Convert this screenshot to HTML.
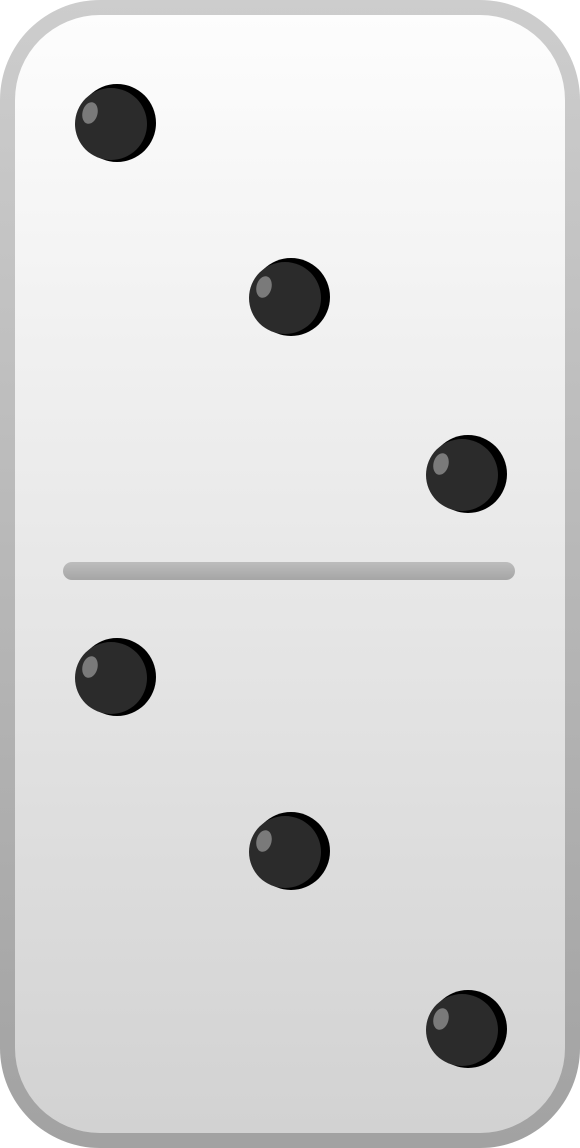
<!DOCTYPE html>
<html><head><style>
html,body{margin:0;padding:0;background:#fff;}
</style></head><body>
<svg width="580" height="1148" viewBox="0 0 580 1148" xmlns="http://www.w3.org/2000/svg" style="display:block">
<defs>
<linearGradient id="bd" x1="0" y1="0" x2="0" y2="1"><stop offset="0" stop-color="#cdcdcd"/><stop offset="1" stop-color="#a2a2a2"/></linearGradient>
<linearGradient id="fc" x1="0" y1="0" x2="0" y2="1"><stop offset="0" stop-color="#fdfdfd"/><stop offset="1" stop-color="#d2d2d2"/></linearGradient>
<linearGradient id="dv" x1="0" y1="0" x2="0" y2="1"><stop offset="0" stop-color="#bdbdbd"/><stop offset="1" stop-color="#a5a5a5"/></linearGradient>
<g id="pip">
<circle cx="3" cy="0" r="39" fill="#000"/>
<circle cx="-3" cy="1" r="36" fill="#2b2b2b"/>
<ellipse cx="-24" cy="-10" rx="7.5" ry="11" fill="#7a7a7a" transform="rotate(15 -24 -10)"/>
</g>
</defs>
<rect x="0" y="0" width="580" height="1148" rx="100" fill="url(#bd)"/>
<rect x="15" y="15" width="550" height="1118" rx="85" fill="url(#fc)"/>
<rect x="63" y="562" width="452" height="18" rx="9" fill="url(#dv)"/>
<use href="#pip" x="114" y="123"/>
<use href="#pip" x="288" y="297"/>
<use href="#pip" x="465" y="474"/>
<use href="#pip" x="114" y="677"/>
<use href="#pip" x="288" y="851"/>
<use href="#pip" x="465" y="1029"/>
</svg>
</body></html>
